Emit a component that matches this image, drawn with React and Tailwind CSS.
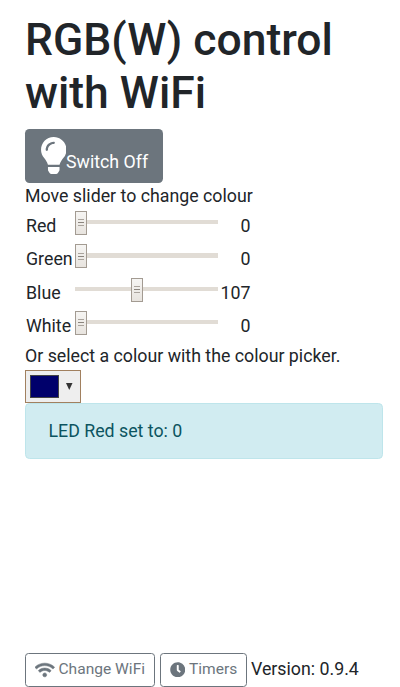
import React from "react";
import { FaLightbulb, FaWifi, FaClock } from "react-icons/fa";

const channels = [
  { name: "Red", value: 0 },
  { name: "Green", value: 0 },
  { name: "Blue", value: 107 },
  { name: "White", value: 0 },
];

function Slider({ value }) {
  return (
    <div className="relative mb-[7px] h-[24px] w-[143px]">
      <div className="absolute inset-x-0 top-[9px] h-[4.5px] bg-[#e1dcd5]" />
      <div
        className="absolute top-0 flex h-[24px] w-[12px] flex-col items-center justify-center gap-[2px] border border-[#a39b92] bg-linear-to-b from-[#f6f5f3] to-[#e8e4df]"
        style={{ left: (value / 255) * 133 }}
      >
        <span className="h-px w-[6px] bg-[#aaa49d]" />
        <span className="h-px w-[6px] bg-[#8b857e]" />
        <span className="h-px w-[6px] bg-[#aaa49d]" />
      </div>
    </div>
  );
}

export default function App() {
  return (
    <div className="flex h-[687px] w-[400px] flex-col overflow-hidden bg-white pl-[25px] pr-[17.5px] pt-[14px] font-[Roboto,sans-serif] text-[17.78px] leading-[26.67px] text-[#212529]">
      <h1 className="mb-[8px] text-[44.44px] font-medium leading-[53.33px]">
        RGB(W) control
        <br />
        with WiFi
      </h1>
      <button className="flex h-[54.5px] w-[138px] shrink-0 items-end rounded-[4.5px] bg-[#6c757d] pb-[7px] pl-[15.5px] text-white">
        <FaLightbulb className="mb-[2.5px] h-[37px] w-[25.5px] shrink-0" />
        <span className="whitespace-nowrap">Switch Off</span>
      </button>
      <p className="whitespace-nowrap">Move slider to change colour</p>
      <div className="-mt-[0.1px]">
        {channels.map((c) => (
          <div key={c.name} className="flex h-[33.33px] w-[225.5px] items-center pl-px">
            <span className="w-[49px] shrink-0">{c.name}</span>
            <Slider value={c.value} />
            <span className="flex-1 text-right">{c.value}</span>
          </div>
        ))}
      </div>
      <p className="mb-[0.6px] whitespace-nowrap">Or select a colour with the colour picker.</p>
      <div className="flex h-[33px] w-[56px] shrink-0 items-center border border-[#a1805f] bg-[#eeeeee] pl-[4px]">
        <div className="h-[23px] w-[29px] border border-[#444444] bg-[#00006b]" />
        <svg viewBox="0 0 7 8" className="mb-[1px] ml-[7px] h-[7px] w-[6.5px]" preserveAspectRatio="none" fill="#333">
          <path d="M0 0H7L3.5 8Z" />
        </svg>
      </div>
      <div className="flex h-[56px] shrink-0 items-center rounded-[4.5px] border border-[#bee5eb] bg-[#d1ecf1] pl-[22.5px] text-[#0c5460]">
        LED Red set to: 0
      </div>
      <div className="mt-auto flex h-[34px] shrink-0 items-center whitespace-nowrap">
        <button className="flex h-[34px] w-[130px] items-center rounded-[3.5px] border border-[#6c757d] pb-px pl-[9px] text-[15.56px] text-[#6c757d]">
          <FaWifi className="mr-[4px] h-[16px] w-[19.5px] stroke-[18px]" />
          Change WiFi
        </button>
        <button className="ml-[4.5px] mr-[4.5px] flex h-[34px] w-[87px] items-center rounded-[3.5px] border border-[#6c757d] pb-px pl-[9px] text-[15.56px] text-[#6c757d]">
          <FaClock className="mr-[4px] h-[15.5px] w-[15.5px]" />
          Timers
        </button>
        <span className="pb-px">Version: 0.9.4</span>
      </div>
    </div>
  );
}
